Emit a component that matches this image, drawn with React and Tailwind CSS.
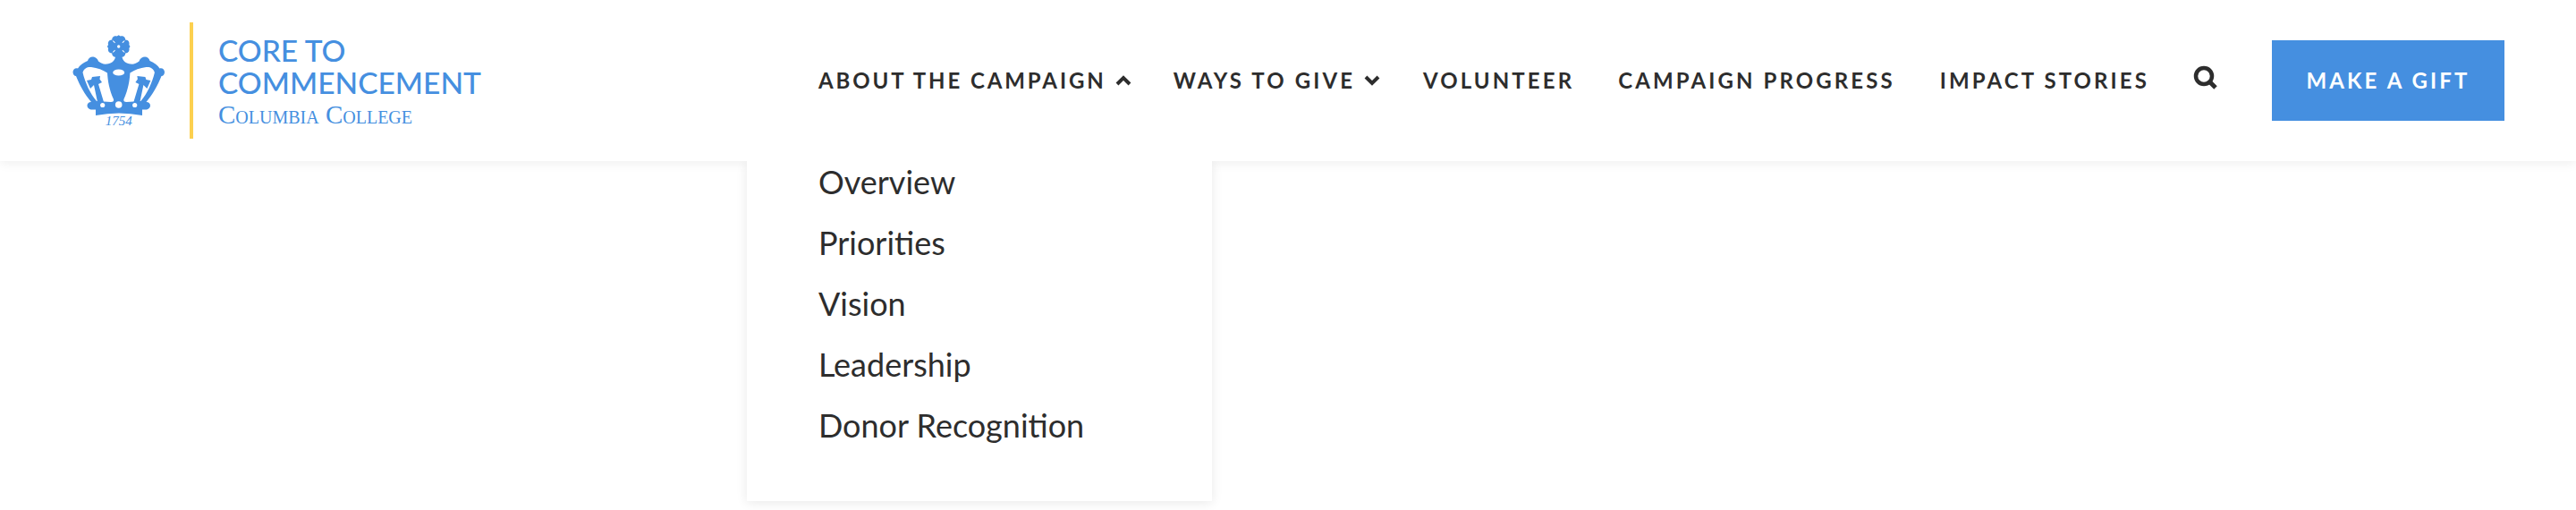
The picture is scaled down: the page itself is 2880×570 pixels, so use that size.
import React from "react";

const BLUE = "#458fe0";

const SUB_LINKS = ["Overview", "Priorities", "Vision", "Leadership", "Donor Recognition"];

// crown traced from the logo, drawn in a 130x120 box
const Crown = () => (
  <svg width="130" height="120" viewBox="0 0 130 120" className="shrink-0">
    <g fill={BLUE}>
      {[0, 90, 180, 270].map((r) => (
        <path
          key={r}
          transform={`translate(60.7 22) rotate(${r})`}
          d="M-3 0 L-3.4 -3 C-4 -5.5 -5.4 -6.6 -7.4 -7 C-8 -10.5 -4.6 -12.6 -2 -11.6 L0 -12.8 L2 -11.6 C4.6 -12.6 8 -10.5 7.4 -7 C5.4 -6.6 4 -5.5 3.4 -3 L3 0 Z"
        />
      ))}
      <circle cx="60.7" cy="22" r="5.5" />
      <path d="M57.5 29 C58 36 54 41 48 41.5 C44 42 41 41 38 38.5 C37 35 34 33.5 31.5 33.5 C29 33.5 26.5 35.5 26 38 C21 40 17 43 15 46.5 C12 45.5 9.5 48 9.5 50.5 C9.5 53 11 55 13 55 C17 65 23 76 30 84 C27 84 25.5 86 25.5 88 C25.5 90 27 92 29.5 92.5 L35 92.5 L35 99 Q61 94 87 99 L87 92.5 L92 92.5 C94.5 92 96 90 96 88 C96 86 94.5 84 91.5 84 C98.5 76 104.5 65 108.5 55 C110.5 55 112 53 112 50.5 C112 48 109.5 45.5 106.5 46.5 C104.5 43 100.5 40 95.5 38 C95 35.5 92.5 33.5 90 33.5 C87.5 33.5 84.5 35 83.5 38.5 C80.5 41 77.5 42 73.5 41.5 C67.5 41 63.5 36 64 29 Z" />
    </g>
    <g fill="#fff">
      <circle cx="60.7" cy="22" r="1.7" />
      <ellipse cx="60.7" cy="51" rx="6.5" ry="3.6" />
      <path d="M20.5 51 C22 46 26 44.5 30 45 C37 46 43 48 48 51.5 C48.5 60 50 70 55 81 C55.5 83 54.5 84 52 84 L36 83 C29 75 23 62 20.5 51 Z" />
      <path d="M100.9 51 C99.4 46 95.4 44.5 91.4 45 C84.4 46 78.4 48 73.4 51.5 C72.9 60 71.4 70 66.4 81 C65.9 83 66.9 84 69.4 84 L85.4 83 C92.4 75 98.4 62 100.9 51 Z" />
      <circle cx="42.7" cy="87.5" r="2.6" />
      <circle cx="60.7" cy="87" r="3.8" />
      <circle cx="78.7" cy="87.5" r="2.6" />
    </g>
    <g fill={BLUE}>
      <path d="M25 60 L30 59 L31 56 L40 55 L39.5 58.5 L42 62 L38 64 L44 84 L37 84 L33 65 L29 69 Z" />
      <path d="M96.4 60 L91.4 59 L90.4 56 L81.4 55 L81.9 58.5 L79.4 62 L83.4 64 L77.4 84 L84.4 84 L88.4 65 L92.4 69 Z" />
    </g>
    <text
      x="60.7"
      y="110"
      textAnchor="middle"
      fill={BLUE}
      fontSize="15"
      fontStyle="italic"
      fontFamily="'Liberation Serif', serif"
    >
      1754
    </text>
  </svg>
);

const Chevron = ({ up }) => (
  <svg width="18" height="12" viewBox="0 0 18 12" className="ml-[10px] shrink-0">
    <path
      d={up ? "M2 10 L9 3 L16 10" : "M2 2 L9 9 L16 2"}
      fill="none"
      stroke="#2d2d2d"
      strokeWidth="4"
    />
  </svg>
);

const navFont = "font-['Lato',sans-serif] text-[24px] font-bold text-[#2d2d2d] whitespace-nowrap";
const navText = `${navFont} tracking-[3.1px]`;

export default function App() {
  return (
    <div className="h-[570px] w-[2880px] overflow-hidden bg-white">
      <header className="relative flex h-[180px] items-center justify-between bg-white pl-[72px] pr-[80px] shadow-[0_2px_12px_rgba(0,0,0,0.07)]">
        <div className="flex items-center">
          <Crown />
          <div className="ml-[10px] h-[130px] w-[4px] bg-[#fcd04f]" />
          <div className="ml-[28px] flex flex-col text-[#458fe0]">
            <span className="font-['Lato',sans-serif] text-[33.5px] font-medium leading-[36px]">CORE TO</span>
            <span className="font-['Lato',sans-serif] text-[33.5px] font-medium leading-[36px]">COMMENCEMENT</span>
            <span className="mt-[4px] font-['Liberation_Serif',serif] text-[29px] leading-[28px] [font-variant:small-caps]">
              Columbia College
            </span>
          </div>
        </div>

        <nav className="flex items-center">
          <div className="relative flex items-center">
            <a className={`${navFont} tracking-[2.9px]`}>ABOUT THE CAMPAIGN</a>
            <Chevron up />
            {/* open dropdown hangs off the first nav item */}
            <div className="absolute left-[-80px] top-[108px] h-[380px] w-[520px] bg-white shadow-[0_2px_12px_rgba(0,0,0,0.09)] [clip-path:inset(0_-30px_-30px_-30px)]">
              <ul className="-mt-[11px] flex flex-col pl-[80px]">
                {SUB_LINKS.map((link) => (
                  <li
                    key={link}
                    className="font-['Lato',sans-serif] text-[36px] leading-[68px] text-[#2d2d2d] whitespace-nowrap"
                  >
                    {link}
                  </li>
                ))}
              </ul>
            </div>
          </div>
          <div className="ml-[47px] flex items-center">
            <a className={navText}>WAYS TO GIVE</a>
            <Chevron />
          </div>
          <a className={`ml-[48px] ${navText}`}>VOLUNTEER</a>
          <a className={`ml-[49px] ${navText}`}>CAMPAIGN PROGRESS</a>
          <a className={`ml-[50px] ${navText}`}>IMPACT STORIES</a>
          <svg width="28" height="28" viewBox="0 0 28 28" className="mb-[6px] ml-[49px]">
            <circle cx="12" cy="12" r="9" fill="none" stroke="#2d2d2d" strokeWidth="4.5" />
            <path d="M18 18 L25 25" stroke="#2d2d2d" strokeWidth="5" />
          </svg>
          <button className="ml-[60px] flex h-[90px] w-[260px] items-center justify-center bg-[#458fe0] font-['Lato',sans-serif] text-[24px] font-bold tracking-[3.1px] text-white">
            MAKE A GIFT
          </button>
        </nav>
      </header>
    </div>
  );
}
